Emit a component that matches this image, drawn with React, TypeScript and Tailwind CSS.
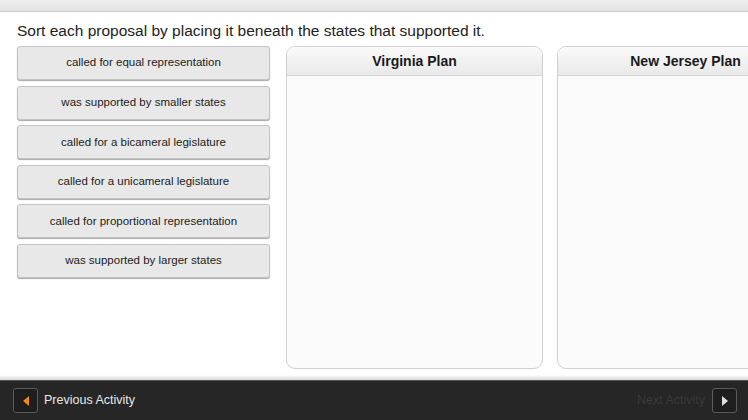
const proposals = [
  "called for equal representation",
  "was supported by smaller states",
  "called for a bicameral legislature",
  "called for a unicameral legislature",
  "called for proportional representation",
  "was supported by larger states",
];

const plans = ["Virginia Plan", "New Jersey Plan"];

export default function App() {
  return (
    <div className="flex h-[420px] w-[748px] flex-col overflow-hidden bg-white font-['Liberation_Sans',Arial,sans-serif]">
      <div className="h-[12px] shrink-0 border-b border-[#d0d0d0] bg-gradient-to-b from-[#f0f0f0] to-[#e2e2e2]" />

      <div className="flex min-h-0 flex-1 flex-col pl-[17px]">
        <p className="mt-[9px] text-[15.5px] leading-[20px] text-[#222]">
          Sort each proposal by placing it beneath the states that supported it.
        </p>

        <div className="mt-[5px] flex gap-[16px]">
          <div className="flex w-[253px] shrink-0 flex-col gap-[5.6px]">
            {proposals.map((p) => (
              <div
                key={p}
                className="flex h-[34px] items-center justify-center rounded-[3px] border border-[#c4c4c4] bg-[#e8e8e8] text-[11.5px] text-[#222] shadow-[0_1px_1px_rgba(0,0,0,0.35)]"
              >
                {p}
              </div>
            ))}
          </div>

          <div className="flex gap-[14px]">
            {plans.map((plan) => (
              <div
                key={plan}
                className="flex h-[323px] w-[257px] shrink-0 flex-col overflow-hidden rounded-[9px] border border-[#cfcfcf] bg-[#fbfbfb]"
              >
                <div className="flex h-[29px] items-center justify-center border-b border-[#d6d6d6] bg-gradient-to-b from-[#fafafa] to-[#e9e9e9] text-[14px] font-bold text-[#1a1a1a]">
                  {plan}
                </div>
              </div>
            ))}
          </div>
        </div>
      </div>

      <div className="h-[5px] shrink-0 bg-gradient-to-b from-[#ffffff] to-[#d8d8d8]" />
      <div className="flex h-[40px] shrink-0 items-center justify-between border-t border-[#555] bg-[#262626] pl-[13px] pr-[11px]">
        <div className="flex items-center gap-[6px]">
          <div className="flex h-[25px] w-[25px] items-center justify-center rounded-[3px] border border-[#5a5a5a] bg-[#1e1e1e]">
            <svg width="8" height="10" viewBox="0 0 8 10">
              <path d="M7 0 L1 5 L7 10 Z" fill="#f08a1c" />
            </svg>
          </div>
          <span className="text-[12.5px] text-[#e8e8e8]">Previous Activity</span>
        </div>
        <div className="flex items-center gap-[7px]">
          <span className="text-[12.5px] text-[#3a3a3a]">Next Activity</span>
          <div className="flex h-[25px] w-[25px] items-center justify-center rounded-[3px] border border-[#5a5a5a] bg-[#1e1e1e]">
            <svg width="8" height="10" viewBox="0 0 8 10">
              <path d="M1 0 L7 5 L1 10 Z" fill="#e0e0e0" />
            </svg>
          </div>
        </div>
      </div>
    </div>
  );
}
